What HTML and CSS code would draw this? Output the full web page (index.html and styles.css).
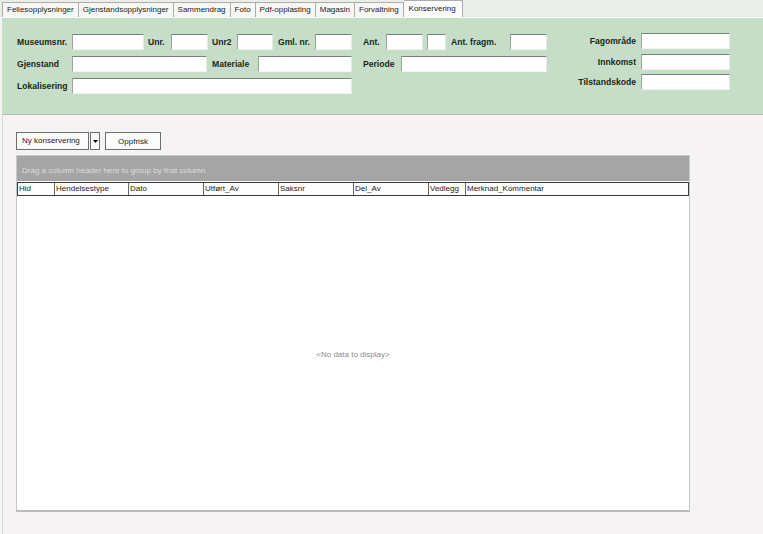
FILE: index.html
```html
<!DOCTYPE html>
<html lang="no">
<head>
<meta charset="utf-8">
<title>Konservering</title>
<link rel="stylesheet" href="styles.css">
</head>
<body>
<div class="tabs">
  <div class="tab">Fellesopplysninger</div>
  <div class="tab">Gjenstandsopplysninger</div>
  <div class="tab">Sammendrag</div>
  <div class="tab">Foto</div>
  <div class="tab">Pdf-opplasting</div>
  <div class="tab">Magasin</div>
  <div class="tab">Forvaltning</div>
  <div class="tab active">Konservering</div>
</div>
<div class="page">
  <div class="filter">
    <div class="left">
      <div class="row">
        <span class="lbl w55">Museumsnr.</span><span class="inp i72"></span>
        <span class="lbl ml4 w23">Unr.</span><span class="inp i37"></span>
        <span class="lbl ml4 w25">Unr2</span><span class="inp i36"></span>
        <span class="lbl ml5 w37">Gml. nr.</span><span class="inp i37"></span>
        <span class="lbl ml11 w23">Ant.</span><span class="inp i37"></span>
        <span class="inp ml4 i19"></span>
        <span class="lbl ml5 w59">Ant. fragm.</span><span class="inp i37"></span>
      </div>
      <div class="row">
        <span class="lbl w55">Gjenstand</span><span class="inp i135"></span>
        <span class="lbl ml5 w46">Materiale</span><span class="inp i94"></span>
        <span class="lbl ml11 w38">Periode</span><span class="inp i146"></span>
      </div>
      <div class="row">
        <span class="lbl w55">Lokalisering</span><span class="inp i280"></span>
      </div>
    </div>
    <div class="right">
      <span class="lbl r">Fagområde</span><span class="inp"></span>
      <span class="lbl r">Innkomst</span><span class="inp"></span>
      <span class="lbl r">Tilstandskode</span><span class="inp"></span>
    </div>
  </div>
  <div class="toolbar">
    <div class="split"><span class="btn-main">Ny konservering</span><span class="btn-arrow"><svg width="5" height="3" viewBox="0 0 5 3"><path d="M0 0h5L2.5 3z" fill="#000"/></svg></span></div>
    <div class="btn">Oppfrisk</div>
  </div>
  <div class="grid">
    <div class="group">Drag a column header here to group by that column</div>
    <div class="head">
      <span>Hid</span><span>Hendelsestype</span><span>Dato</span><span>Utført_Av</span><span>Saksnr</span><span>Del_Av</span><span>Vedlegg</span><span>Merknad_Kommentar</span>
    </div>
    <div class="body">&lt;No data to display&gt;</div>
  </div>
</div>
</body>
</html>
```

FILE: styles.css
```css
html, body {
  margin: 0;
  padding: 0;
}
body {
  width: 763px;
  height: 534px;
  overflow: hidden;
  background: #f5f3f3;
  font-family: "Liberation Sans", Arial, sans-serif;
  font-size: 8px;
  color: #1c1c1c;
}
.tabs {
  display: flex;
  align-items: flex-end;
  height: 17px;
  padding-left: 2px;
  background: #e9eee9;
  border-bottom: 1px solid #fafcfa;
}
.tab {
  height: 14px;
  line-height: 14px;
  padding: 0 4px;
  background: #f6f6f4;
  border: 1px solid #a9aea9;
  border-bottom: none;
  border-left: none;
  white-space: nowrap;
}
.tab:first-child {
  border-left: 1px solid #a9aea9;
}
.tab.active {
  height: 16px;
  line-height: 15px;
  background: #fbfbfb;
  padding: 0 6px 0 5px;
}
.page {
  margin-left: 2px;
  border-left: 1px solid #c9dfc9;
  height: 516px;
}
.filter {
  display: flex;
  height: 97px;
  box-sizing: border-box;
  background: #c6dec7;
  border-bottom: 1px solid #aebfae;
  padding-left: 14px;
}
.left {
  display: flex;
  flex-direction: column;
  gap: 6px;
  padding-top: 16px;
}
.row {
  display: flex;
  align-items: center;
  height: 16px;
}
.lbl {
  font-weight: bold;
  font-size: 8.6px;
  white-space: nowrap;
  color: #1b261b;
}
.w55 { width: 55px; }
.w23 { width: 23px; }
.w25 { width: 25px; }
.w37 { width: 37px; }
.w59 { width: 59px; }
.w46 { width: 46px; }
.w38 { width: 38px; }
.ml4 { margin-left: 4px; }
.ml5 { margin-left: 5px; }
.ml11 { margin-left: 11px; }
.inp {
  display: block;
  height: 16px;
  box-sizing: border-box;
  background: #ffffff;
  border-top: 1px solid #76827a;
  border-left: 1px solid #9aa49b;
  border-right: 1px solid #e3ece3;
  border-bottom: 1px solid #eef4ee;
}
.i19 { width: 19px; }
.i36 { width: 36px; }
.i37 { width: 37px; }
.i72 { width: 72px; }
.i94 { width: 94px; }
.i135 { width: 135px; }
.i146 { width: 146px; }
.i280 { width: 280px; }
.right {
  margin-left: auto;
  margin-right: 33px;
  padding-top: 15px;
  display: grid;
  grid-template-columns: auto 89px;
  grid-auto-rows: 16px;
  column-gap: 5px;
  row-gap: 4.5px;
  align-items: center;
}
.right .inp {
  width: 89px;
}
.lbl.r {
  text-align: right;
}
.toolbar {
  display: flex;
  gap: 5px;
  padding: 17px 0 0 13px;
  height: 18px;
}
.btn {
  width: 56px;
  height: 18px;
  box-sizing: border-box;
  background: #fbfbfb;
  border: 1px solid #6e6e6e;
  display: flex;
  align-items: center;
  justify-content: center;
}
.split {
  width: 84px;
  display: flex;
  gap: 1px;
}
.btn-main {
  height: 18px;
  box-sizing: border-box;
  width: 73px;
  border: 1px solid #6e6e6e;
  background: #fbfbfb;
  padding-left: 5px;
  line-height: 16px;
}
.btn-arrow {
  height: 18px;
  box-sizing: border-box;
  width: 10px;
  border: 1px solid #6e6e6e;
  background: #fbfbfb;
  display: flex;
  align-items: center;
  justify-content: center;
}
.grid {
  margin: 5px 0 0 13px;
  width: 674px;
  height: 357px;
  box-sizing: border-box;
  border: 1px solid #c8c8c8;
  border-bottom: 2px solid #bcbcbc;
  background: #ffffff;
  display: flex;
  flex-direction: column;
}
.group {
  height: 25px;
  background: #a5a5a5;
  color: #dcdcdc;
  padding: 4px 0 0 5px;
  box-sizing: border-box;
  display: flex;
  align-items: center;
}
.head {
  display: grid;
  grid-template-columns: 36px 74px 75px 75px 75px 75px 37px 1fr;
  height: 14px;
  box-sizing: border-box;
  border: 1px solid #3a3a3a;
  background: #fdfdfd;
  margin-top: 1px;
}
.head span {
  border-left: 1px solid #6a6a6a;
  line-height: 12px;
  padding-left: 1px;
  white-space: nowrap;
}
.head span:first-child {
  border-left: none;
}
.body {
  flex: 1;
  display: flex;
  align-items: center;
  justify-content: center;
  color: #8a8a8a;
  padding-top: 2px;
}
```
